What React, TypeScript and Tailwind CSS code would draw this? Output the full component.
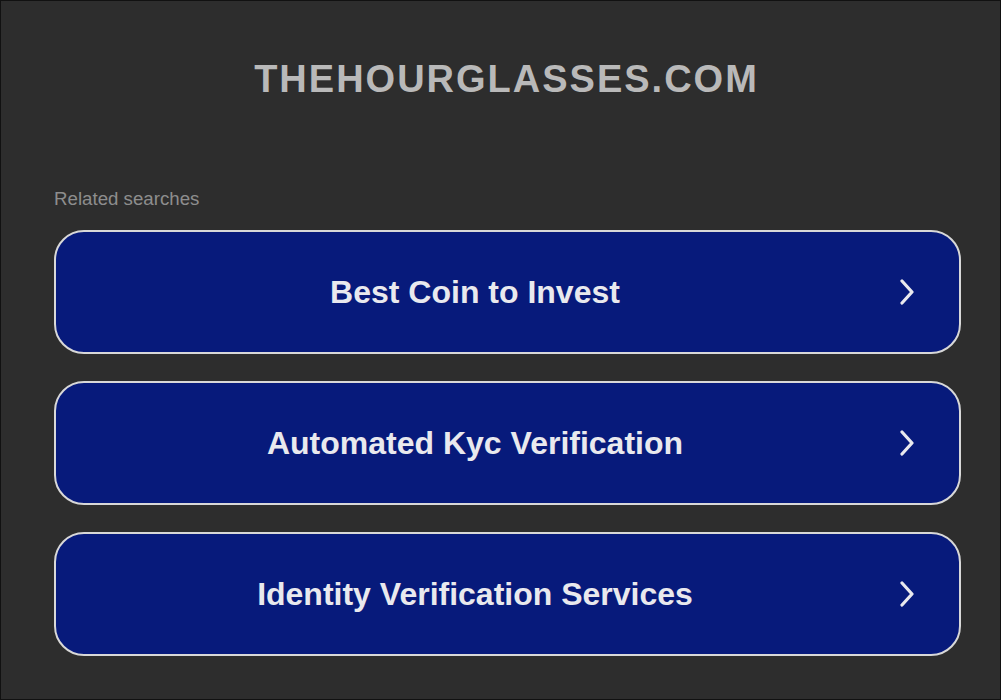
const searches = [
  "Best Coin to Invest",
  "Automated Kyc Verification",
  "Identity Verification Services",
];

function Chevron() {
  return (
    <svg viewBox="0 0 16 26" fill="none" stroke="currentColor" strokeWidth="3.2" className="h-[26px] w-[16px]">
      <path d="M3 2l10 11L3 24" strokeLinecap="round" strokeLinejoin="round" />
    </svg>
  );
}

export default function App() {
  return (
    <div className="flex h-[700px] w-[1001px] flex-col border border-[#111] bg-[#2d2d2d] font-['Liberation_Sans',Arial,sans-serif]">
      <header className="flex justify-center pl-[12px] pt-[54px]">
        <h1 className="text-[38px] font-bold leading-[48px] tracking-[2px] text-[#b9b9b9]">
          THEHOURGLASSES.COM
        </h1>
      </header>

      <main className="ml-[53px] w-[907px] pt-[86px]">
        <p className="text-[18.7px] leading-[20px] text-[#8d8d8d]">Related searches</p>
        <div className="mt-[21px] flex flex-col gap-[27px]">
          {searches.map((s) => (
            <a
              key={s}
              href="#"
              className="flex h-[124px] items-center rounded-[30px] border-2 border-[#d8d8d8] bg-[#071a7b] text-[#e9e9ee]"
            >
              <span className="flex-1 text-center text-[32px] font-bold">{s}</span>
              <span className="flex w-[65px] justify-start pl-[5px]">
                <Chevron />
              </span>
            </a>
          ))}
        </div>
      </main>
    </div>
  );
}
